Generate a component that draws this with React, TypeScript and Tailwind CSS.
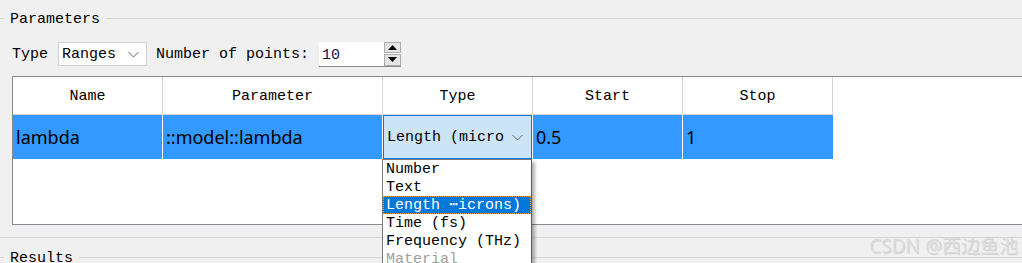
import React from "react"

const mono = "font-['Liberation_Mono',monospace] text-[15px]"
const sans = "font-['Noto_Sans',sans-serif] text-[18px]"

const columns = [
  { label: "Name", w: "w-[150px]" },
  { label: "Parameter", w: "w-[220px]" },
  { label: "Type", w: "w-[150px]" },
  { label: "Start", w: "w-[150px]" },
  { label: "Stop", w: "w-[150px]" },
]

const options = ["Number", "Text", "Length \u22eficrons)", "Time (fs)", "Frequency (THz)", "Material"]

function Chevron({ className }: { className?: string }) {
  return (
    <svg width="11" height="7" viewBox="0 0 11 7" className={className}>
      <path d="M0.5 1 L5.5 6 L10.5 1" fill="none" stroke="#606060" strokeWidth="1" />
    </svg>
  )
}

function GroupTitle({ title }: { title: string }) {
  return (
    <div className="flex items-center h-[18px]">
      <div className="w-[4px] border-t border-[#d5d5d5]" />
      <span className={`${mono} px-[6px] pt-[4px] leading-[18px] text-black`}>{title}</span>
      <div className="flex-1 border-t border-[#d5d5d5]" />
    </div>
  )
}

function TypeDropdown() {
  return (
    <div className="absolute left-[-1px] top-full w-[150px] bg-white border border-[#7a7a7a] border-r-[#5a5a5a] shadow-[3px_3px_3px_rgba(0,0,0,0.3)] z-10">
      {options.map((opt, i) => {
        const selected = i === 2
        const disabled = opt === "Material"
        return (
          <div
            key={opt}
            className={`${mono} h-[18px] leading-[18px] pt-[1px] pl-[3px] whitespace-nowrap overflow-hidden ${
              selected
                ? "bg-[#0078d7] text-white outline outline-1 outline-dotted outline-[#f0a030] -outline-offset-1"
                : disabled
                  ? "text-[#a0a0a0]"
                  : "text-black"
            }`}
          >
            {opt}
          </div>
        )
      })}
    </div>
  )
}

export default function App() {
  return (
    <div className="relative w-[1022px] h-[263px] overflow-hidden bg-[#f0f0f0]">
      {/* Parameters group */}
      <div className="pt-[9px]">
        <GroupTitle title="Parameters" />
      </div>

      <div className="flex items-center h-[24px] mt-[15px] pl-[12px]">
        <span className={`${mono} pt-[3px] text-black`}>Type</span>
        <div className="ml-[10px] w-[89px] h-[24px] bg-white border border-[#cfcfcf] flex items-center justify-between pl-[3px] pr-[7px]">
          <span className={`${mono} pt-[3px] text-black`}>Ranges</span>
          <Chevron />
        </div>
        <span className={`${mono} ml-[9px] pt-[3px] text-black`}>Number of points:</span>
        <div className="ml-[10px] w-[82px] h-[25px] bg-white border-b border-[#8a8a8a] flex items-stretch">
          <span className={`${mono} flex-1 pl-[3px] pt-[2px] leading-[24px] text-[#10104a]`}>10</span>
          <div className="w-[17px] flex flex-col gap-[1px]">
            <div className="flex-1 bg-[#e5e5e5] border border-[#adadad] flex items-center justify-center">
              <svg width="9" height="5" viewBox="0 0 9 5"><path d="M0 5 L4.5 0 L9 5 Z" fill="#000" /></svg>
            </div>
            <div className="flex-1 bg-[#e5e5e5] border border-[#adadad] flex items-center justify-center">
              <svg width="9" height="5" viewBox="0 0 9 5"><path d="M0 0 L4.5 5 L9 0 Z" fill="#000" /></svg>
            </div>
          </div>
        </div>
      </div>

      {/* Table */}
      <div className="ml-[12px] mt-[10px] h-[149px] bg-white border border-r-0 border-[#868a91]">
        <div className="flex h-[38px]">
          {columns.map((c) => (
            <div
              key={c.label}
              className={`${c.w} ${mono} pt-[4px] flex items-center justify-center border-r border-b border-[#d5d5d5] text-black`}
            >
              {c.label}
            </div>
          ))}
        </div>
        <div className="flex h-[44px]">
          <div className={`w-[150px] ${sans} bg-[#3399ff] border-r border-white pl-[3px] flex items-center text-black`}>lambda</div>
          <div className={`w-[220px] ${sans} bg-[#3399ff] border-r border-white pl-[3px] flex items-center text-black`}>::model::lambda</div>
          <div className="relative w-[150px] bg-[#3399ff] border-r border-white">
            <div className="h-full bg-[#cce4f7] border border-[#0078d7] flex items-center justify-between pl-[3px] pr-[8px]">
              <span className={`${mono} pt-[3px] text-black whitespace-nowrap`}>Length (micro</span>
              <Chevron />
            </div>
            <TypeDropdown />
          </div>
          <div className={`w-[150px] ${sans} bg-[#3399ff] border-r border-white pl-[3px] flex items-center text-black`}>0.5</div>
          <div className={`w-[150px] ${sans} bg-[#3399ff] pl-[3px] flex items-center text-black`}>1</div>
        </div>
      </div>

      <div className="mt-[12px] border-t border-[#d5d5d5]" />

      {/* Results group */}
      <div className="pt-[10px]">
        <GroupTitle title="Results" />
      </div>

      <div className="absolute right-[4px] bottom-[7px] font-['Noto_Sans','Noto_Sans_CJK_SC',sans-serif] text-[19px] leading-[20px] text-[#dcdcdc] [text-shadow:1px_1px_0_rgba(0,0,0,0.12)]">
        CSDN @西边鱼池
      </div>
    </div>
  )
}
